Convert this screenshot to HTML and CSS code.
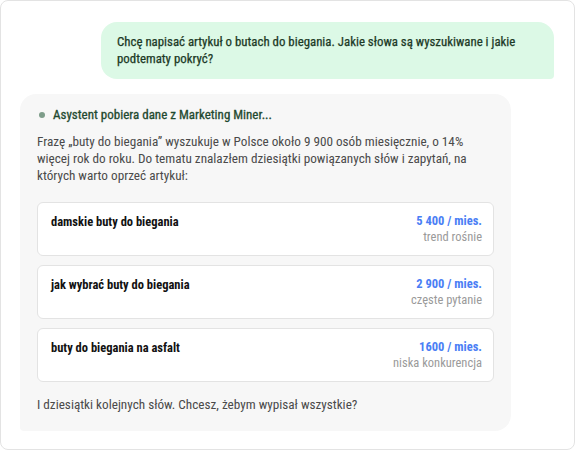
FILE: index.html
```html
<!DOCTYPE html>
<html lang="pl">
<head>
    <meta charset="UTF-8">
    <title>Asystent SEO - czat</title>
    <link rel="stylesheet" href="styles.css">
</head>
<body>
    <div class="chat">
        <div class="msg msg-user">
            Chcę napisać artykuł o butach do biegania. Jakie słowa są wyszukiwane i jakie podtematy pokryć?
        </div>

        <div class="msg msg-bot">
            <div class="status">
                <span class="status-dot"></span>
                Asystent pobiera dane z Marketing Miner...
            </div>

            <p class="intro">
                Frazę „buty do biegania” wyszukuje w Polsce około 9&nbsp;900 osób miesięcznie, o 14% więcej rok do roku. Do tematu znalazłem dziesiątki powiązanych słów i zapytań, na których warto oprzeć artykuł:
            </p>

            <div class="keywords">
                <div class="kw-card">
                    <div class="kw-name">damskie buty do biegania</div>
                    <div class="kw-meta">
                        <div class="kw-volume">5&nbsp;400 / mies.</div>
                        <div class="kw-note">trend rośnie</div>
                    </div>
                </div>
                <div class="kw-card">
                    <div class="kw-name">jak wybrać buty do biegania</div>
                    <div class="kw-meta">
                        <div class="kw-volume">2&nbsp;900 / mies.</div>
                        <div class="kw-note">częste pytanie</div>
                    </div>
                </div>
                <div class="kw-card">
                    <div class="kw-name">buty do biegania na asfalt</div>
                    <div class="kw-meta">
                        <div class="kw-volume">1600 / mies.</div>
                        <div class="kw-note">niska konkurencja</div>
                    </div>
                </div>
            </div>

            <p class="outro">I dziesiątki kolejnych słów. Chcesz, żebym wypisał wszystkie?</p>
        </div>
    </div>
</body>
</html>
```

FILE: styles.css
```css
* {
    box-sizing: border-box;
}
body {
    margin: 0;
    background: #fff;
    font-family: "Liberation Sans Narrow", "Roboto Condensed", Roboto, sans-serif;
    font-size: 13px;
    line-height: 17px;
}
.chat {
    height: 450px;
    border: 1px solid #e3e3e3;
    border-radius: 8px;
    padding: 21px 20px 0 19px;
    display: flex;
    flex-direction: column;
}
.msg {
    border-radius: 16px;
}
.msg-user {
    align-self: flex-end;
    width: 453px;
    padding: 11px 16px 12px 16px;
    background: #dcf9e6;
    color: #1c3a26;
    font-size: 12.85px;
    -webkit-text-stroke: 0.25px #1c3a26;
    border-bottom-right-radius: 4px;
}
.msg-bot {
    width: 491px;
    margin-top: 15px;
    padding: 12px 17px 18px 17px;
    background: #f7f7f7;
    color: #4a4a4a;
    border-bottom-left-radius: 4px;
}
.status {
    display: flex;
    align-items: center;
    gap: 8px;
    padding-left: 2px;
    color: #1f4a30;
    -webkit-text-stroke: 0.3px #1f4a30;
}
.status-dot {
    width: 6px;
    height: 6px;
    border-radius: 50%;
    background: #7e9d8a;
}
.intro {
    margin: 10px 0 0;
    padding-right: 10px;
    font-size: 13.2px;
}
.keywords {
    display: flex;
    flex-direction: column;
    gap: 9px;
    margin-top: 18px;
}
.kw-card {
    display: flex;
    justify-content: space-between;
    padding: 10px 11px 10px 13px;
    background: #fff;
    border: 1px solid #e3e3e3;
    border-radius: 6px;
}
.kw-name {
    color: #111;
    font-weight: bold;
    font-size: 12.5px;
}
.kw-meta {
    text-align: right;
    line-height: 16px;
    font-size: 12.5px;
}
.kw-volume {
    color: #4a7ef5;
    font-weight: bold;
}
.kw-note {
    color: #9a9a9a;
}
.outro {
    margin: 14px 0 0;
    font-size: 13.2px;
}
```
